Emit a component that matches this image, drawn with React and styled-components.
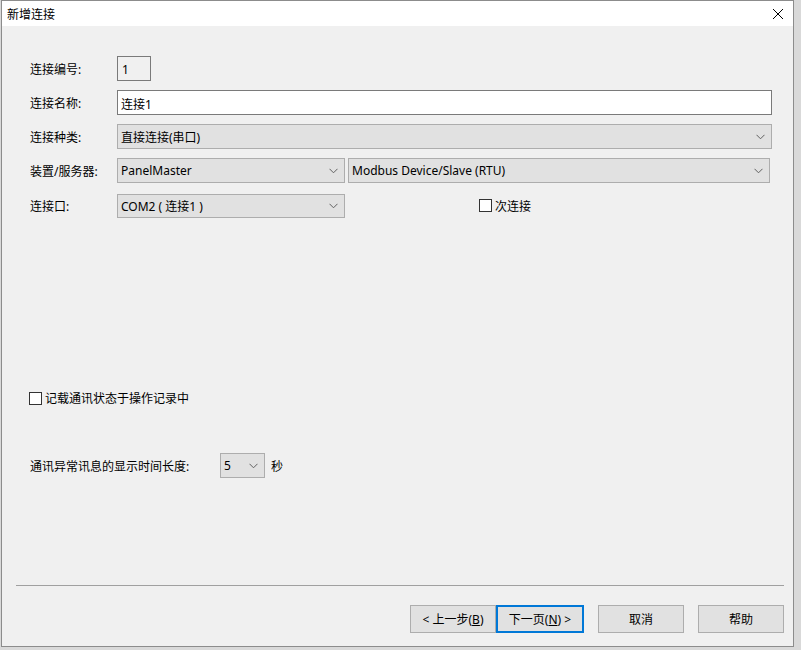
import React from "react";
import styled, { createGlobalStyle } from "styled-components";

const Global = createGlobalStyle`
  html, body { margin: 0; padding: 0; }
  body {
    background: #d9d9d9;
    font-family: "Noto Sans", "Noto Sans CJK SC", sans-serif;
    font-size: 12px;
    color: #000;
    width: 801px;
    height: 650px;
    overflow: hidden;
  }
`;

const Window = styled.div`
  margin-left: 1px;
  width: 793px;
  height: 647px;
  border: 1px solid #8c8c8c;
  background: #f0f0f0;
  display: flex;
  flex-direction: column;
  box-sizing: border-box;
`;

const TitleBar = styled.div`
  height: 25px;
  background: #fff;
  display: flex;
  align-items: center;
  justify-content: space-between;
  padding: 0 9px 0 5px;
  font-size: 12px;
`;

const Body = styled.div`
  flex: 1;
  display: flex;
  flex-direction: column;
  padding: 30px 0 0 28px;
`;

const Rows = styled.div`
  display: flex;
  flex-direction: column;
  gap: 9px;
`;

const Row = styled.div`
  display: flex;
  align-items: center;
  height: ${(p) => p.$h || 25}px;
  margin-top: ${(p) => p.$mt || 0}px;
`;

const Label = styled.div`
  width: ${(p) => p.$w || 87}px;
  flex-shrink: 0;
`;

const NumBox = styled.div`
  width: 34px;
  height: 25px;
  box-sizing: border-box;
  border: 1px solid #7a7a7a;
  padding: 4px 0 0 4px;
`;

const TextInput = styled.div`
  width: ${(p) => p.$w}px;
  height: 25px;
  box-sizing: border-box;
  border: 1px solid #7a7a7a;
  background: #fff;
  padding: 4px 0 0 3px;
`;

const Select = styled.div`
  width: ${(p) => p.$w}px;
  height: ${(p) => p.$h || 25}px;
  box-sizing: border-box;
  border: 1px solid #adadad;
  background: #e1e1e1;
  display: flex;
  align-items: center;
  justify-content: space-between;
  padding: 0 6px 0 3px;
  margin-left: ${(p) => p.$ml || 0}px;
  flex-shrink: 0;
`;

const Check = styled.span`
  width: 13px;
  height: 13px;
  box-sizing: border-box;
  border: 1px solid #333;
  background: #fff;
  display: inline-block;
  margin-right: 3px;
`;

const CheckLabel = styled.label`
  display: flex;
  align-items: center;
  margin-left: ${(p) => p.$ml || 0}px;
`;

const Spacer = styled.div`
  flex: 1;
`;

const Separator = styled.div`
  height: 1px;
  background: #a0a0a0;
  margin: 0 9px 0 -14px;
`;

const Footer = styled.div`
  display: flex;
  justify-content: flex-end;
  padding: 19px 9px 13px 0;
`;

const Button = styled.button`
  width: ${(p) => p.$w || 86}px;
  height: 28px;
  box-sizing: border-box;
  font: inherit;
  font-size: 12px;
  background: #e1e1e1;
  border: ${(p) => (p.$def ? "2px solid #0078d7" : "1px solid #adadad")};
  margin-left: ${(p) => p.$ml || 0}px;
  padding: 0;
  color: #000;
  u { text-decoration: underline; }
`;

const Chevron = () => (
  <svg width="9" height="6" viewBox="0 0 9 6">
    <path d="M0.5 0.8 L4.5 4.8 L8.5 0.8" fill="none" stroke="#606060" strokeWidth="1" />
  </svg>
);

const Close = () => (
  <svg width="12" height="12" viewBox="0 0 12 12">
    <path d="M1 1 L11 11 M11 1 L1 11" stroke="#000" strokeWidth="1" />
  </svg>
);

export default function App() {
  return (
    <>
      <Global />
      <Window>
        <TitleBar>
          <span>新增连接</span>
          <Close />
        </TitleBar>
        <Body>
          <Rows>
            <Row>
              <Label>连接编号:</Label>
              <NumBox>1</NumBox>
            </Row>
            <Row>
              <Label>连接名称:</Label>
              <TextInput $w={655}>连接1</TextInput>
            </Row>
            <Row>
              <Label>连接种类:</Label>
              <Select $w={655}>
                <span>直接连接(串口)</span>
                <Chevron />
              </Select>
            </Row>
            <Row>
              <Label>装置/服务器:</Label>
              <Select $w={228}>
                <span>PanelMaster</span>
                <Chevron />
              </Select>
              <Select $w={422} $ml={3}>
                <span>Modbus Device/Slave (RTU)</span>
                <Chevron />
              </Select>
            </Row>
            <Row $mt={1}>
              <Label>连接口:</Label>
              <Select $w={228} $h={24}>
                <span>COM2 ( 连接1 )</span>
                <Chevron />
              </Select>
              <CheckLabel $ml={134}>
                <Check />
                次连接
              </CheckLabel>
            </Row>
          </Rows>
          <Row $mt={171} $h={18}>
            <CheckLabel $ml={-1}>
              <Check />
              记载通讯状态于操作记录中
            </CheckLabel>
          </Row>
          <Row $mt={46}>
            <Label $w={190}>通讯异常讯息的显示时间长度:</Label>
            <Select $w={45}>
              <span>5</span>
              <Chevron />
            </Select>
            <span style={{ marginLeft: 6 }}>秒</span>
          </Row>
          <Spacer />
          <Separator />
          <Footer>
            <Button>&lt; 上一步(<u>B</u>)</Button>
            <Button $def $w={88}>下一页(<u>N</u>) &gt;</Button>
            <Button $ml={14}>取消</Button>
            <Button $ml={14}>帮助</Button>
          </Footer>
        </Body>
      </Window>
    </>
  );
}
